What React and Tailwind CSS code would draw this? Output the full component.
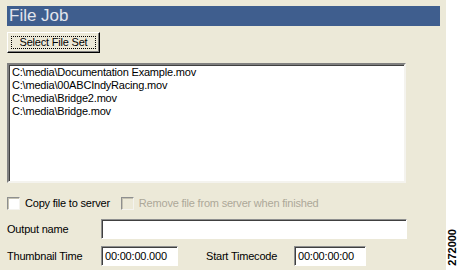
const files = [
  'C:\\media\\Documentation Example.mov',
  'C:\\media\\00ABCIndyRacing.mov',
  'C:\\media\\Bridge2.mov',
  'C:\\media\\Bridge.mov',
]

function Checkbox({ disabled }) {
  return (
    <span
      className={
        'block w-[13px] h-[13px] border border-t-[#8e8f8f] border-l-[#8e8f8f] border-b-[#f4f3ee] border-r-[#f4f3ee] shadow-[inset_1px_1px_0_#c5c2b2] ' +
        (disabled ? 'bg-[#ece9d8]' : 'bg-white')
      }
    />
  )
}

function Field({ width, value }) {
  return (
    <div
      className={
        'h-[20px] bg-white border border-t-[#8e8f8f] border-l-[#8e8f8f] border-b-white border-r-white shadow-[inset_1px_1px_0_#404040] pl-[3px] flex items-center ' +
        width
      }
    >
      {value}
    </div>
  )
}

export default function App() {
  return (
    <div className="w-[459px] h-[270px] flex bg-white text-[11px] tracking-[-0.2px] text-black [font-family:'Liberation_Sans',Arial,sans-serif] overflow-hidden">
      {/* Panel */}
      <div className="w-[446px] h-full bg-[#ece9d8] pl-[7px] pt-[6px] flex flex-col">
        <div className="w-[433px] h-[20px] bg-[#3f5e8e] text-[#e2e5ec] text-[17px] tracking-normal leading-[20px] pl-[2px]">
          File Job
        </div>

        <button className="mt-[6px] w-[93px] h-[21px] bg-[#ece9d8] border border-t-white border-l-white border-b-black border-r-black shadow-[inset_-1px_-1px_0_#808080] p-[3px] flex">
          <span className="flex-1 flex items-center justify-center border border-dotted border-black leading-none">
            Select File Set
          </span>
        </button>

        <div className="mt-[10px] w-[399px] h-[120px] bg-white border-2 border-t-[#808080] border-l-[#808080] border-b-[#f4f3ee] border-r-[#f4f3ee] shadow-[inset_1px_1px_0_#404040] pl-[3px] pt-[1px] leading-[13px]">
          {files.map((f) => (
            <div key={f}>{f}</div>
          ))}
        </div>

        <div className="mt-[14px] h-[13px] flex items-center">
          <Checkbox />
          <span className="ml-[5px]">Copy file to server</span>
          <span className="ml-[11px]">
            <Checkbox disabled />
          </span>
          <span className="ml-[5px] text-[#aca899]">Remove file from server when finished</span>
        </div>

        <div className="mt-[9px] flex items-center">
          <span className="w-[94px]">Output name</span>
          <Field width="w-[306px]" />
        </div>

        <div className="mt-[7px] flex items-center">
          <span className="w-[94px]">Thumbnail Time</span>
          <Field width="w-[77px]" value="00:00:00.000" />
          <span className="ml-[28px] w-[88px]">Start Timecode</span>
          <Field width="w-[72px]" value="00:00:00:00" />
        </div>
      </div>

      {/* Figure number */}
      <div className="flex-1 flex items-end justify-center pb-[4px]">
        <span className="[writing-mode:vertical-rl] rotate-180 font-bold text-[11px] tracking-normal leading-none">
          272000
        </span>
      </div>
    </div>
  )
}
